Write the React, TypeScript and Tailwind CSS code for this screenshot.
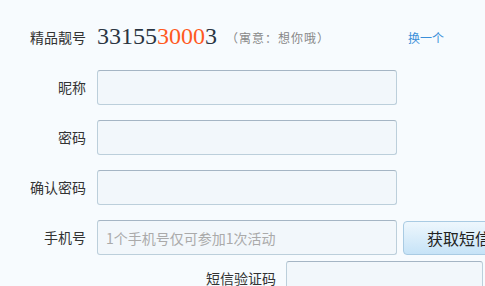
const cjk = { fontFamily: '"Noto Sans CJK SC", "Liberation Sans", sans-serif' };

function Label({ children }: { children: React.ReactNode }) {
  return <label className="w-[86px] shrink-0 text-right text-[14px] text-[#333]">{children}</label>;
}

function Field({ placeholder, className = "w-[300px]" }: { placeholder?: string; className?: string }) {
  return (
    <input
      placeholder={placeholder}
      style={cjk}
      className={`${className} h-[35px] shrink-0 rounded-[3px] border border-[#bccfdb] border-t-[#a5b5c4] bg-[#f2f7fb] px-[8px] text-[14px] text-[#333] outline-none placeholder:text-[#aaa]`}
    />
  );
}

export default function App() {
  return (
    <div style={cjk} className="h-[286px] w-[485px] overflow-hidden bg-[#f7fbfe] pt-[20px]">
      <div className="flex flex-col gap-[15px]">
        <div className="flex h-[35px] items-center">
          <Label>精品靓号</Label>
          <span
            className="ml-[11px] pb-[4px] text-[24px] leading-none text-[#2b3542]"
            style={{ fontFamily: '"Liberation Serif", serif' }}
          >
            33155<span className="text-[#ff5a1e]">3000</span>3
          </span>
          <span className="ml-[9px] text-[12px] tracking-[1px] text-[#888]">（寓意：想你哦）</span>
          <a href="#" className="ml-[78px] text-[12px] text-[#3b8fd9]">换一个</a>
        </div>

        <div className="flex h-[35px] items-center gap-[11px]">
          <Label>昵称</Label>
          <Field />
        </div>
        <div className="flex h-[35px] items-center gap-[11px]">
          <Label>密码</Label>
          <Field />
        </div>
        <div className="flex h-[35px] items-center gap-[11px]">
          <Label>确认密码</Label>
          <Field />
        </div>

        <div className="flex flex-col gap-[6px]">
          <div className="flex h-[35px] items-center">
            <Label>手机号</Label>
            <div className="ml-[11px]">
              <Field placeholder="1个手机号仅可参加1次活动" />
            </div>
            <button className="ml-[6px] h-[34px] w-[130px] shrink-0 rounded-[4px] border border-[#a9cbe3] bg-gradient-to-b from-[#eef7fd] to-[#c6e3f7] pl-[23px] text-left text-[16px] whitespace-nowrap text-[#222]">
              获取短信验证码
            </button>
          </div>
          <div className="flex h-[35px] items-center pl-[206px]">
            <span className="w-[80px] shrink-0 text-[14px] text-[#333]">短信验证码</span>
            <Field className="w-[197px]" />
          </div>
        </div>
      </div>
    </div>
  );
}
